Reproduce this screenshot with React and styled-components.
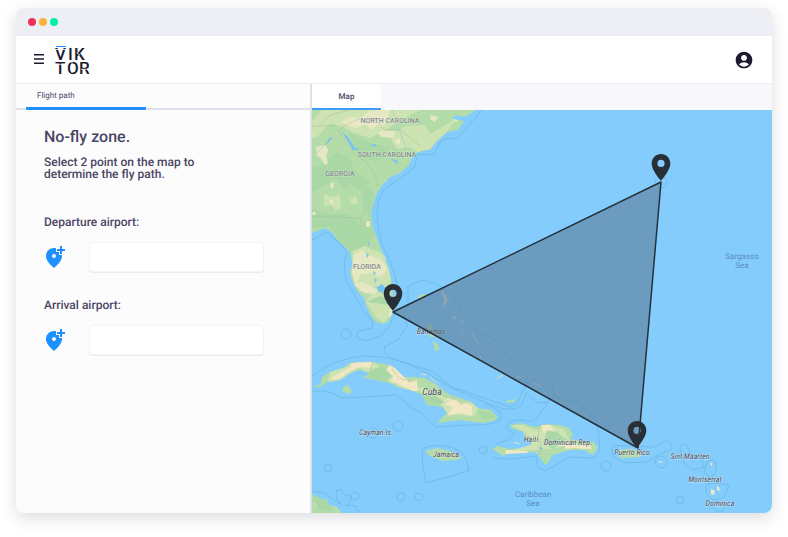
import React from "react";
import styled, { createGlobalStyle } from "styled-components";
import { MdAccountCircle, MdAddLocationAlt } from "react-icons/md";

const seaLines = [
  "M482 110L470 124L457 138L444 139L440 142L435 153L428 155L418 154L414 168L393 183L383 191L378 202L377 215L379 232L382 245L388 257L395 275L398 290L397 308L390 325L381 336L365 341L356 337L358 331L372 328L373 322L363 310L352 290L346 282L344 262L347 253L342 245L327 232L312 240",
  "M312 376Q335 358 365 356Q395 355 425 372L450 387L470 396L495 406Q512 413 522 405L526 393",
  "M312 391L327 391L343 398L397 395L409 406L424 415L435 427L470 425Q495 426 501 419Q504 409 485 404",
  "M384 347Q383 356 396 360L432 371L452 387L510 407L517 404L526 384",
  "M408 311L408 286L423 280L438 285L451 293L468 324L477 331L495 340L512 361L527 377L526 384L537 378L552 386L554 395L562 400L580 403L597 422L599 439Q602 455 592 458L570 457L545 471L538 468L536 456L512 459L493 458",
  "M384 347L398 340L407 326L404 314",
  "M526 393L538 403L548 402L535 420M548 402L554 395",
  "M422 451Q426 444 445 446Q462 448 467 461L469 471L426 483Q422 466 422 451Z",
  "M493 451Q492 443 508 440L515 434L507 429Q505 421 518 420L533 421",
  "M612 449Q613 444 625 446L656 447L665 441Q673 441 672 449L660 454L646 462L625 463L613 457Z",
  "M680 449Q681 442 687 445L690 453L700 457L704 467L693 470L684 463Z",
  "M707 462Q714 457 716 464L716 472L711 478L704 473Z",
  "M706 484L718 483L729 485L724 497L713 500L706 493Z",
  "M312 491L324 493L342 505L337 499L336 491L341 489L345 496L349 495Q354 501 346 505L356 506L359 512",
];

const circles = [
  [346, 334, 5], [328, 468, 4], [355, 496, 4], [401, 497, 4], [419, 497, 4],
  [398, 426, 5], [373, 433, 5], [483, 450, 4], [606, 466, 5], [661, 462, 6],
  [680, 500, 4], [661, 182, 6], [719, 507, 5],
];

const landmasses = [
  "M312 110L475 110L470 114L464 117L456 115L452 119L458 120L464 121L458 130L447 132L441 137L436 142L431 149L418 152L412 158L409 165L400 173L390 177L383 184L377 193L374 202L371 213L373 228L378 241L382 252L388 267L391 278L393 297L392 313L389 321L383 324L376 322L370 314L366 305L364 298L358 292L354 284L351 277L350 270L353 266L350 252L343 245L336 238L332 232L325 228L312 233Z",
  "M313 387L321 384L322 377L330 372L343 368L350 363L373 362L390 365L396 370L403 377L413 377L425 378L437 385L448 394L460 398L472 402L477 408L490 410L498 417L494 421L483 423L474 422L460 420L437 423L447 413L443 407L427 405L422 395L413 391L397 387L388 382L378 380L363 378L370 373L360 370L350 373L340 380L327 382L320 387Z",
  "M343 387L348 385L352 391L349 394L343 392Z",
  "M425 451L438 448L453 452L462 458L455 460L443 461L430 456Z",
  "M510 425L522 423L535 427L547 424L560 425L569 428L573 435L570 439L583 441L594 442L598 448L593 455L584 450L570 450L560 453L552 455L549 462L545 465L540 457L535 452L520 453L510 452L503 456L492 449L497 446L510 449L528 448L532 443L525 438L523 432L512 428Z",
  "M618 450L630 449L643 452L640 457L620 458Z",
  "M312 494L319 498L327 500L329 505L337 507L342 513L312 513Z",
  "M427 325L431 324L435 337L430 337ZM433 341L438 344L439 350L435 351ZM417 296L424 294L427 296L420 299Z",
  "M506 401L516 399L517 397L514 402L507 403Z",
];

const meadows = [
  "M322 110L420 110L405 118L390 127L370 138L354 133L343 127L330 123L317 137L312 138L312 121Z",
  "M405 126L425 125L430 134L447 124L456 119L447 132L436 142L430 149L418 152L409 147L397 149L390 137Z",
  "M324 194L331 197L340 195L341 208L336 211L331 204L324 207Z",
  "M359 186L366 188L365 194L359 193ZM350 199L356 196L358 203L352 204ZM316 212L321 211L320 214Z",
  "M350 244L364 246L373 250L382 253L389 269L391 282L386 288L378 286L360 292L354 284L352 271L356 264Z",
  "M366 302L372 292L385 290L392 304L391 314L384 323L376 317Z",
  "M330 372L343 368L357 362L373 362L388 374L398 386L413 391L422 387L440 395L454 402L472 403L478 408L474 416L448 414L443 407L431 398L418 390L389 382L370 373L358 368L340 380L328 382Z",
  "M511 425L523 425L535 430L548 425L564 429L570 442L590 445L585 450L566 446L549 449L535 450L510 451L533 444L526 433Z",
  "M313 503L319 501L325 506L320 511Z",
];

const woods = [
  "M312 167L325 163L336 152L350 158L354 170L370 181L366 186L374 192L371 214L364 212L362 193L351 184L344 190L337 179L312 192Z",
  "M312 208L327 214L348 214L359 224L371 218L374 236L365 246L351 252L342 243L330 227L312 228Z",
  "M347 132L372 144L389 147L388 154L376 162L359 155Z",
  "M366 302L380 296L391 300L386 305L376 303Z",
  "M370 370L384 366L391 376L386 383L367 377ZM423 395L433 393L444 402L440 405L427 404Z",
  "M547 431L557 432L566 440L553 449L543 443ZM477 411L490 412L496 417L484 420Z",
  "M312 494L320 498L327 502L334 512L318 510Z",
];

const farmland = [
  "M370 110L390 110L384 127L377 125L372 130L365 124L356 128L348 126L341 122L350 117L361 118Z",
  "M378 133L384 130L396 131L393 138L381 137ZM395 140L400 138L400 144L396 145Z",
  "M431 115L438 117L435 122L430 119ZM452 119L459 120L456 122Z",
  "M316 147L325 145L328 150L326 156L328 163L325 165L321 158L317 156Z",
  "M331 182L334 184L333 189L330 187ZM330 200L333 200L333 205L330 204Z",
  "M366 221L370 221L370 227L366 227ZM312 213L315 211L316 214L313 216Z",
  "M353 255L362 250L367 254L374 257L380 259L387 267L385 273L379 277L374 273L361 274L356 284L352 273Z",
  "M354 284L362 282L369 285L378 290L375 294L364 293Z",
  "M390 310L393 306L392 315L389 318Z",
];

const sand = [
  "M331 378L340 373L351 367L351 363L373 362L370 368L360 367L350 371L340 378L333 380Z",
  "M386 370L390 365L396 369L405 378L410 382L417 380L418 391L413 391L400 385L391 381L393 376Z",
  "M448 398L459 401L460 405L466 403L472 406L472 416L460 413L447 416L453 407L443 403Z",
  "M541 425L551 425L554 431L548 430L544 434ZM506 450L528 451L527 453L505 454Z",
  "M565 445L573 443L578 446L590 445L592 449L575 448L565 449Z",
  "M711 489L715 491L714 495L711 494ZM717 486L719 487L720 491L717 490ZM710 462L713 464L711 466ZM658 461L663 462L660 463Z",
];

const lakes = [
  "M325 145L330 137L332 138L327 144ZM342 132L348 137L355 148L360 150L353 150ZM370 145L376 144L375 147ZM390 158L398 161L397 164Z",
  "M377 287L382 284L386 288L382 293L378 291ZM367 242L370 243L369 246ZM366 253L369 255L367 258ZM373 271L376 273L374 275ZM374 278L377 280L375 283Z",
  "M538 447L543 448L541 450Z",
];

const cays = [
  "M442 291L447 299L444 307L445 299ZM453 316L456 318L454 319ZM461 320L464 325M462 329L463 333M472 334L478 343M491 345L492 346M480 356L482 360M497 379L503 375M516 376L522 378M533 383L542 387",
  "M421 374L427 375M430 377L437 383M385 180L387 182M383 254L386 260M514 442L520 444",
];

const places = [
  { name: "Cuba", x: 432, y: 395, size: 10 },
  { name: "Bahamas", x: 431, y: 334, size: 8 },
  { name: "Cayman Is.", x: 376, y: 435, size: 8 },
  { name: "Jamaica", x: 446, y: 457, size: 8 },
  { name: "Haiti", x: 531, y: 442, size: 8 },
  { name: "Dominican Rep.", x: 568, y: 445, size: 8 },
  { name: "Puerto Rico", x: 632, y: 455, size: 8 },
  { name: "Sint Maarten", x: 690, y: 459, size: 8 },
  { name: "Montserrat", x: 705, y: 482, size: 8 },
  { name: "Dominica", x: 720, y: 506, size: 8 },
];

const states = [
  { name: "NORTH CAROLINA", x: 390, y: 123 },
  { name: "SOUTH CAROLINA", x: 387, y: 157 },
  { name: "GEORGIA", x: 340, y: 176 },
  { name: "FLORIDA", x: 367, y: 269 },
];

const seas = [
  { name: "Sargasso", x: 742, y: 259 },
  { name: "Sea", x: 742, y: 268 },
  { name: "Caribbean", x: 533, y: 497 },
  { name: "Sea", x: 533, y: 506 },
];

const pins = [
  [393, 312],
  [661, 182],
  [637, 449],
];

const Logo = () => (
  <LogoSvg width="36" height="36" viewBox="0 0 36 36" role="img" aria-label="Viktor">
    <rect x="1" y="4" width="10" height="1" fill="#1e90ff" />
    <LogoText x="0 13 19" y="18">VIK</LogoText>
    <LogoText x="0 12 24" y="32">TOR</LogoText>
    <path d="M0 7.5H11M0 22.3H11M17 31V19M21.6 11L25 13M26 27.3H34" stroke="#fff" strokeWidth="0.8" fill="none" />
  </LogoSvg>
);

const Pin = ({ x, y }) => (
  <path
    transform={`translate(${x} ${y}) scale(1.33)`}
    d="M0-21C-3.87-21-7-17.87-7-14C-7-8.75 0-1 0-1S7-8.75 7-14C7-17.87 3.87-21 0-21ZM0-11.3A2.7 2.7 0 1 1 0-16.7A2.7 2.7 0 0 1 0-11.3Z"
    fill="#282f36"
  />
);

const Map = () => (
  <MapSvg viewBox="312 110 460 403" role="img" aria-label="Map of the no-fly zone">
    <rect x="312" y="110" width="460" height="403" fill="#84ccfb" />
    <g fill="none" stroke="#6dbbe6" strokeWidth="0.9" strokeLinejoin="round">
      {seaLines.map((d, key) => <path key={key} d={d} />)}
      {circles.map(([cx, cy, r], key) => <circle key={key} cx={cx} cy={cy} r={r} />)}
    </g>
    <g fill="#b4dca8">{landmasses.map((d, key) => <path key={key} d={d} />)}</g>
    <g fill="#cde3b1">{meadows.map((d, key) => <path key={key} d={d} />)}</g>
    <g fill="#a9d8a6">{woods.map((d, key) => <path key={key} d={d} />)}</g>
    <g fill="#e6e8c3">{farmland.map((d, key) => <path key={key} d={d} />)}</g>
    <g fill="#f1e8c3">{sand.map((d, key) => <path key={key} d={d} />)}</g>
    <g fill="#75c3f4">{lakes.map((d, key) => <path key={key} d={d} />)}</g>
    <path
      d="M312 126H336M320 126L330 115L350 110M344 126L338 131L345 140L354 153L367 163L374 173L378 187M345 126L358 119L372 119L382 126L384 130H400L419 145M312 216L360 218L361 222L363 213L371 217M540 424L538 438L541 444L539 455M373 362L370 370M392 369L399 378L411 382M430 398L444 403L454 398L463 405"
      fill="none" stroke="#a9b7a2" strokeWidth="0.7" strokeDasharray="2 1"
    />
    <path d="M392 110L400 132L407 150M312 157L325 145" fill="none" stroke="#a6cfd2" strokeWidth="0.8" />
    <g fill="#eee3c6" stroke="#eee3c6" strokeWidth="0.8">
      {cays.map((d, key) => <path key={key} d={d} />)}
    </g>
    {places.map(({ name, x, y, size }) => (
      <PlaceLabel key={name} x={x} y={y} $size={size}>{name}</PlaceLabel>
    ))}
    {states.map(({ name, x, y }) => (
      <StateLabel key={name} x={x} y={y}>{name}</StateLabel>
    ))}
    {seas.map(({ name, x, y }, key) => (
      <SeaLabel key={key} x={x} y={y}>{name}</SeaLabel>
    ))}
    <path
      d="M393 312L661 182L638 448Z"
      fill="#57758e" fillOpacity="0.55" stroke="#25313b" strokeWidth="1.5" strokeLinejoin="round"
    />
    {pins.map(([x, y], key) => <Pin key={key} x={x} y={y} />)}
  </MapSvg>
);

const AirportField = ({ id, label }) => (
  <Field>
    <Label htmlFor={id}>{label}</Label>
    <FieldRow>
      <IconButton type="button" aria-label={`Pick ${id} on map`} $color="#1e90ff">
        <MdAddLocationAlt size={24} />
      </IconButton>
      <Input id={id} type="text" />
    </FieldRow>
  </Field>
);

export default function App() {
  return (
    <>
      <GlobalStyle />
      <Window>
        <TitleBar>
          <Dot $color="#f0305a" />
          <Dot $color="#f7b23b" />
          <Dot $color="#00eeaa" />
        </TitleBar>
        <Header>
          <IconButton type="button" aria-label="Menu" $color="#1b1a2e">
            <svg width="10" height="11" viewBox="0 0 10 11">
              <path d="M0 0.8H10M0 5H10M0 9.2H10" stroke="currentColor" strokeWidth="1.4" />
            </svg>
          </IconButton>
          <Logo />
          <Spacer />
          <IconButton type="button" aria-label="Account" $color="#1b1a2e">
            <MdAccountCircle size={20} />
          </IconButton>
        </Header>
        <Content>
          <Sidebar>
            <SideTabs>
              <SideTab type="button">Flight path</SideTab>
            </SideTabs>
            <Form>
              <Title>No-fly zone.</Title>
              <Description>Select 2 point on the map to determine the fly path.</Description>
              <AirportField id="departure" label="Departure airport:" />
              <AirportField id="arrival" label="Arrival airport:" />
            </Form>
          </Sidebar>
          <Main>
            <MapTabs>
              <MapTab type="button">Map</MapTab>
            </MapTabs>
            <Map />
          </Main>
        </Content>
      </Window>
    </>
  );
}

const GlobalStyle = createGlobalStyle`
  * {
    box-sizing: border-box;
  }
  body {
    margin: 0;
    background: #fff;
    color: #4a4564;
    font-family: Roboto, "Liberation Sans", sans-serif;
    text-rendering: geometricPrecision;
  }
  button, input {
    font-family: inherit;
    color: inherit;
    text-rendering: inherit;
  }
`;

const Window = styled.div`
  margin: 8px 16px 24px;
  border-radius: 8px;
  overflow: hidden;
  background: #fcfcfc;
  box-shadow: 0 5px 16px rgba(40, 45, 70, 0.16);
`;

const TitleBar = styled.div`
  display: flex;
  align-items: center;
  gap: 3px;
  height: 28px;
  padding: 0 12px;
  background: #eeeff5;
`;

const Dot = styled.span`
  width: 8px;
  height: 8px;
  border-radius: 50%;
  background: ${({ $color }) => $color};
`;

const Header = styled.header`
  display: flex;
  align-items: center;
  height: 48px;
  gap: 11px;
  padding: 0 18px;
  background: #fff;
  border-bottom: 1px solid #eeeef2;
`;

const Spacer = styled.div`
  flex: 1;
`;

const IconButton = styled.button`
  display: flex;
  padding: 0;
  border: 0;
  background: none;
  color: ${({ $color }) => $color};
  cursor: pointer;
`;

const LogoSvg = styled.svg`
  overflow: visible;
`;

const LogoText = styled.text`
  font-size: 17px;
  font-weight: 500;
  fill: #1b1a2e;
`;

const Content = styled.div`
  display: grid;
  grid-template-columns: 296px 1fr;
`;

const Sidebar = styled.aside`
  border-right: 2px solid #dfe0ec;
`;

const SideTabs = styled.nav`
  display: flex;
  height: 26px;
  padding-left: 10px;
  background: linear-gradient(#dfe0ec, #dfe0ec) bottom / 100% 2px no-repeat;
`;

const SideTab = styled.button`
  width: 120px;
  padding: 0 11px;
  border: 0;
  border-bottom: 3px solid #1e90ff;
  border-radius: 1px;
  background: none;
  font-size: 8px;
  text-align: left;
  cursor: pointer;
`;

const Form = styled.form`
  padding: 17px 28px;
`;

const Title = styled.h1`
  margin: 0 0 9px;
  font-size: 16px;
  line-height: 20px;
  font-weight: 500;
`;

const Description = styled.p`
  max-width: 170px;
  margin: 0 0 34px;
  font-size: 12px;
  line-height: 12px;
  font-weight: 500;
`;

const Field = styled.div`
  margin-bottom: 25px;
`;

const Label = styled.label`
  display: block;
  margin-bottom: 12px;
  font-size: 12px;
  line-height: 16px;
  font-weight: 500;
`;

const FieldRow = styled.div`
  display: flex;
  align-items: center;
  gap: 23px;
  margin-left: -2px;
`;

const Input = styled.input`
  width: 175px;
  height: 30px;
  padding: 0 8px;
  border: 1px solid #f4f4f5;
  border-radius: 4px;
  background: #fff;
  box-shadow: 0 1px 1px rgba(0, 0, 0, 0.07);
  font-size: 12px;
`;

const Main = styled.main`
  min-width: 0;
`;

const MapTabs = styled.nav`
  display: flex;
  height: 26px;
  background: #f7f7fc;
`;

const MapTab = styled.button`
  width: 69px;
  padding: 0;
  border: 0;
  border-bottom: 2px solid #3d9df8;
  border-top-right-radius: 3px;
  background: #fff;
  font-size: 8px;
  font-weight: 500;
  cursor: pointer;
`;

const MapSvg = styled.svg`
  display: block;
  width: 100%;
  height: auto;
`;

const MapLabel = styled.text`
  text-anchor: middle;
  font-size: 7px;
`;

const PlaceLabel = styled(MapLabel)`
  font-size: ${({ $size }) => $size}px;
  font-family: "Roboto Condensed", Roboto, sans-serif;
  font-style: italic;
  fill: #4b4c5e;
  stroke: rgba(255, 255, 255, 0.5);
  stroke-width: 1px;
  paint-order: stroke;
`;

const StateLabel = styled(MapLabel)`
  font-weight: 500;
  fill: #858a8c;
  stroke: rgba(255, 255, 255, 0.4);
  stroke-width: 1px;
  paint-order: stroke;
`;

const SeaLabel = styled(MapLabel)`
  font-size: 8px;
  fill: #5b8fbf;
`;
